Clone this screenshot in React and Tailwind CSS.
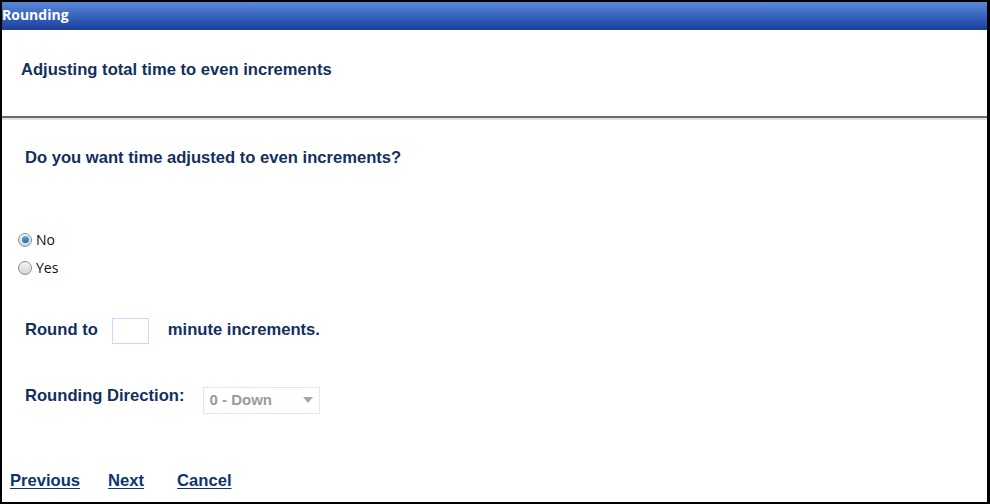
import React, { useState } from "react";

const App = () => {
  const [choice, setChoice] = useState("no");

  return (
    <div className="w-[990px] h-[504px] bg-black pt-[2px] pl-[2px] pr-[3px] pb-[2px]" style={{ fontFamily: "Arial, 'Liberation Sans', sans-serif" }}>
      <div className="h-full bg-white flex flex-col">
        {/* Title bar */}
        <div className="h-[28px] bg-gradient-to-b from-[#5a88d8] to-[#1a3e9e] flex items-center">
          <span className="text-white font-bold text-[14px] leading-none pb-[2px]" style={{ fontFamily: "'Open Sans', sans-serif" }}>
            Rounding
          </span>
        </div>

        {/* Heading */}
        <div className="h-[86px] flex items-center pl-[19px] pb-[5px]">
          <h1 className="text-[16.6px] font-bold text-[#13305e]">Adjusting total time to even increments</h1>
        </div>
        <div className="h-[2px] bg-[#6b6b6b]" />
        <div className="h-[2px] bg-[#e2e2e2]" />

        {/* Question */}
        <div className="pl-[23px] pt-[26px]">
          <h2 className="text-[16.6px] font-bold text-[#13305e]">Do you want time adjusted to even increments?</h2>
        </div>

        {/* Radios */}
        <div className="pl-[16px] pt-[60px] flex flex-col gap-[10px] text-[14px] text-[#111]" style={{ fontFamily: "'Open Sans', sans-serif" }}>
          {[
            ["no", "No"],
            ["yes", "Yes"],
          ].map(([val, label]) => (
            <label key={val} className="flex items-center gap-[4px] h-[18px] cursor-pointer" onClick={() => setChoice(val)}>
              <span className="w-[14px] h-[14px] rounded-full border border-[#8e8e8e] bg-gradient-to-b from-[#f4f4f4] to-[#d4d4d4] flex items-center justify-center">
                {choice === val && <span className="w-[7px] h-[7px] rounded-full bg-gradient-to-b from-[#5fb0e8] to-[#1f6aa8]" />}
              </span>
              <span className="leading-none">{label}</span>
            </label>
          ))}
        </div>

        {/* Round to */}
        <div className="pl-[23px] pt-[41px] flex items-center text-[16.6px] font-bold text-[#13305e]">
          <span>Round to</span>
          <input type="text" className="ml-[14px] w-[37px] h-[26px] border border-[#c9daf2] outline-none" />
          <span className="ml-[19px]">minute increments.</span>
        </div>

        {/* Rounding direction */}
        <div className="pl-[23px] pt-[37px] flex items-start text-[16.6px] font-bold text-[#13305e]">
          <span className="pt-[3px]">Rounding Direction:</span>
          <div className="ml-[19px] w-[117px] h-[27px] border border-[#dde6f4] flex items-center justify-between pl-[5px] pr-[6px] mt-[6px]">
            <span className="text-[#9a9a9a] text-[15px]">0 - Down</span>
            <svg width="10" height="6" viewBox="0 0 10 6">
              <path d="M0 0 L10 0 L5 6 Z" fill="#a6a6a6" />
            </svg>
          </div>
        </div>

        {/* Links */}
        <div className="pl-[8px] pt-[55px] flex gap-[28px] text-[16.6px] font-bold text-[#0e3470]">
          <a href="#" className="underline underline-offset-2">Previous</a>
          <a href="#" className="underline underline-offset-2">Next</a>
          <a href="#" className="underline underline-offset-2 ml-[5px]">Cancel</a>
        </div>
      </div>
    </div>
  );
};

export default App;
